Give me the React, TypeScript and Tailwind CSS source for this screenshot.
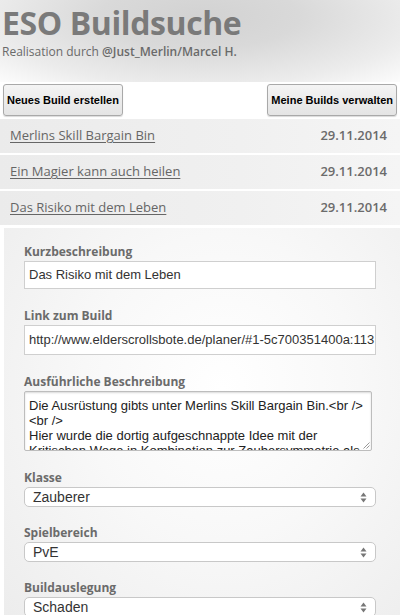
const builds = [
  { title: "Merlins Skill Bargain Bin", date: "29.11.2014" },
  { title: "Ein Magier kann auch heilen", date: "29.11.2014" },
  { title: "Das Risiko mit dem Leben", date: "29.11.2014" },
];

const ubuntu = "font-['Open_Sans',sans-serif]";
const arial = "font-['Liberation_Sans',Arial,sans-serif]";

function SelectArrows() {
  return (
    <svg width="7" height="11" viewBox="0 0 7 11" className="shrink-0">
      <path d="M3.5 0.5 L6.5 4.5 H0.5 Z" fill="#777" />
      <path d="M3.5 10.5 L6.5 6.5 H0.5 Z" fill="#777" />
    </svg>
  );
}

function Field({ label, children }: { label: string; children: React.ReactNode }) {
  return (
    <div className="flex flex-col">
      <label className={`${ubuntu} mb-[1px] text-[12px] font-bold leading-[16px] text-[#6b6b6b]`}>{label}</label>
      {children}
    </div>
  );
}

function FakeSelect({ value }: { value: string }) {
  return (
    <div
      className={`${arial} flex h-[20px] w-[352px] items-center justify-between rounded-[5px] border border-[#c8c8c8] bg-white pl-[8px] pr-[8px] text-[14px] leading-none text-[#333]`}
    >
      <span>{value}</span>
      <SelectArrows />
    </div>
  );
}

export default function App() {
  return (
    <div className="h-[615px] w-[400px] overflow-hidden bg-white">
      {/* Header */}
      <header className="h-[82px] bg-[radial-gradient(ellipse_at_50%_20%,#d2d2d2_0%,#d9d9d9_35%,#ececec_75%,#fcfcfc_100%)] pl-[2px] pt-[4px]">
        <h1 className={`${ubuntu} text-[32px] font-bold leading-[38px] tracking-[-0.4px] text-[#7a7a7a]`}>
          ESO Buildsuche
        </h1>
        <p className={`${ubuntu} mt-[2px] text-[12px] leading-[16px] text-[#6a6a6a]`}>
          Realisation durch <span className="font-semibold">@Just_Merlin/Marcel H.</span>
        </p>
      </header>

      {/* Actions */}
      <div className="flex items-center justify-between px-[3px] pt-[2px] pb-[3px]">
        <button
          className={`${arial} h-[32px] rounded-[3px] border border-[#a9a9a9] bg-[linear-gradient(#f4f4f4,#e4e4e4)] px-[3px] text-[11px] font-bold text-black shadow-[0_1px_1px_rgba(0,0,0,0.15)]`}
        >
          Neues Build erstellen
        </button>
        <button
          className={`${arial} h-[32px] rounded-[3px] border border-[#a9a9a9] bg-[linear-gradient(#f4f4f4,#e4e4e4)] px-[3px] text-[11px] font-bold text-black shadow-[0_1px_1px_rgba(0,0,0,0.15)]`}
        >
          Meine Builds verwalten
        </button>
      </div>

      {/* Build list */}
      <div className="flex flex-col gap-[2px]">
        {builds.map((b) => (
          <div
            key={b.title}
            className="flex h-[34px] items-center justify-between bg-[linear-gradient(to_right,#ebebeb,#f0f0f0_60%,#f5f5f5)] pl-[10px] pr-[13px]"
          >
            <a href="#" className={`${ubuntu} text-[13px] text-[#666] underline underline-offset-2`}>
              {b.title}
            </a>
            <span className={`${ubuntu} text-[13px] font-semibold text-[#6b6b6b]`}>{b.date}</span>
          </div>
        ))}
      </div>

      {/* Form */}
      <div className="mt-[3px] ml-[4px] h-[400px] bg-[radial-gradient(ellipse_at_55%_40%,#ffffff_0%,#f8f8f8_45%,#ececec_100%)] pl-[20px] pt-[16px]">
        <div className="flex flex-col gap-[19px]">
          <Field label="Kurzbeschreibung">
            <div
              className={`${arial} flex h-[28px] w-[352px] items-center border border-[#cfcfcf] bg-white pl-[4px] text-[13px] text-[#333]`}
            >
              Das Risiko mit dem Leben
            </div>
          </Field>
          <Field label="Link zum Build">
            <div
              className={`${arial} flex h-[30px] w-[352px] items-center overflow-hidden whitespace-nowrap border border-[#cfcfcf] bg-white pl-[4px] text-[13px] text-[#333]`}
            >
              http://www.elderscrollsbote.de/planer/#1-5c700351400a:113
            </div>
          </Field>
          <Field label="Ausführliche Beschreibung">
            <div className="relative h-[60px] w-[348px] overflow-hidden rounded-[2px] border border-[#bdbdbd] bg-white shadow-[inset_0_1px_2px_rgba(0,0,0,0.15)]">
              <div className={`${arial} whitespace-nowrap pl-[4px] pt-[6px] text-[13px] leading-[15px] text-[#222]`}>
                <p>Die Ausrüstung gibts unter Merlins Skill Bargain Bin.&lt;br /&gt;</p>
                <p>&lt;br /&gt;</p>
                <p>Hier wurde die dortig aufgeschnappte Idee mit der</p>
                <p>Kritischen Woge in Kombination zur Zaubersymmetrie als</p>
              </div>
              <svg width="7" height="7" viewBox="0 0 7 7" className="absolute right-[1px] bottom-[1px]">
                <path d="M6.5 0.5 L0.5 6.5 M6.5 3.5 L3.5 6.5" stroke="#999" strokeWidth="1" />
              </svg>
            </div>
          </Field>
          <div className="flex flex-col gap-[18px]">
            <Field label="Klasse">
              <FakeSelect value="Zauberer" />
            </Field>
            <Field label="Spielbereich">
              <FakeSelect value="PvE" />
            </Field>
            <Field label="Buildauslegung">
              <FakeSelect value="Schaden" />
            </Field>
          </div>
        </div>
      </div>
    </div>
  );
}
